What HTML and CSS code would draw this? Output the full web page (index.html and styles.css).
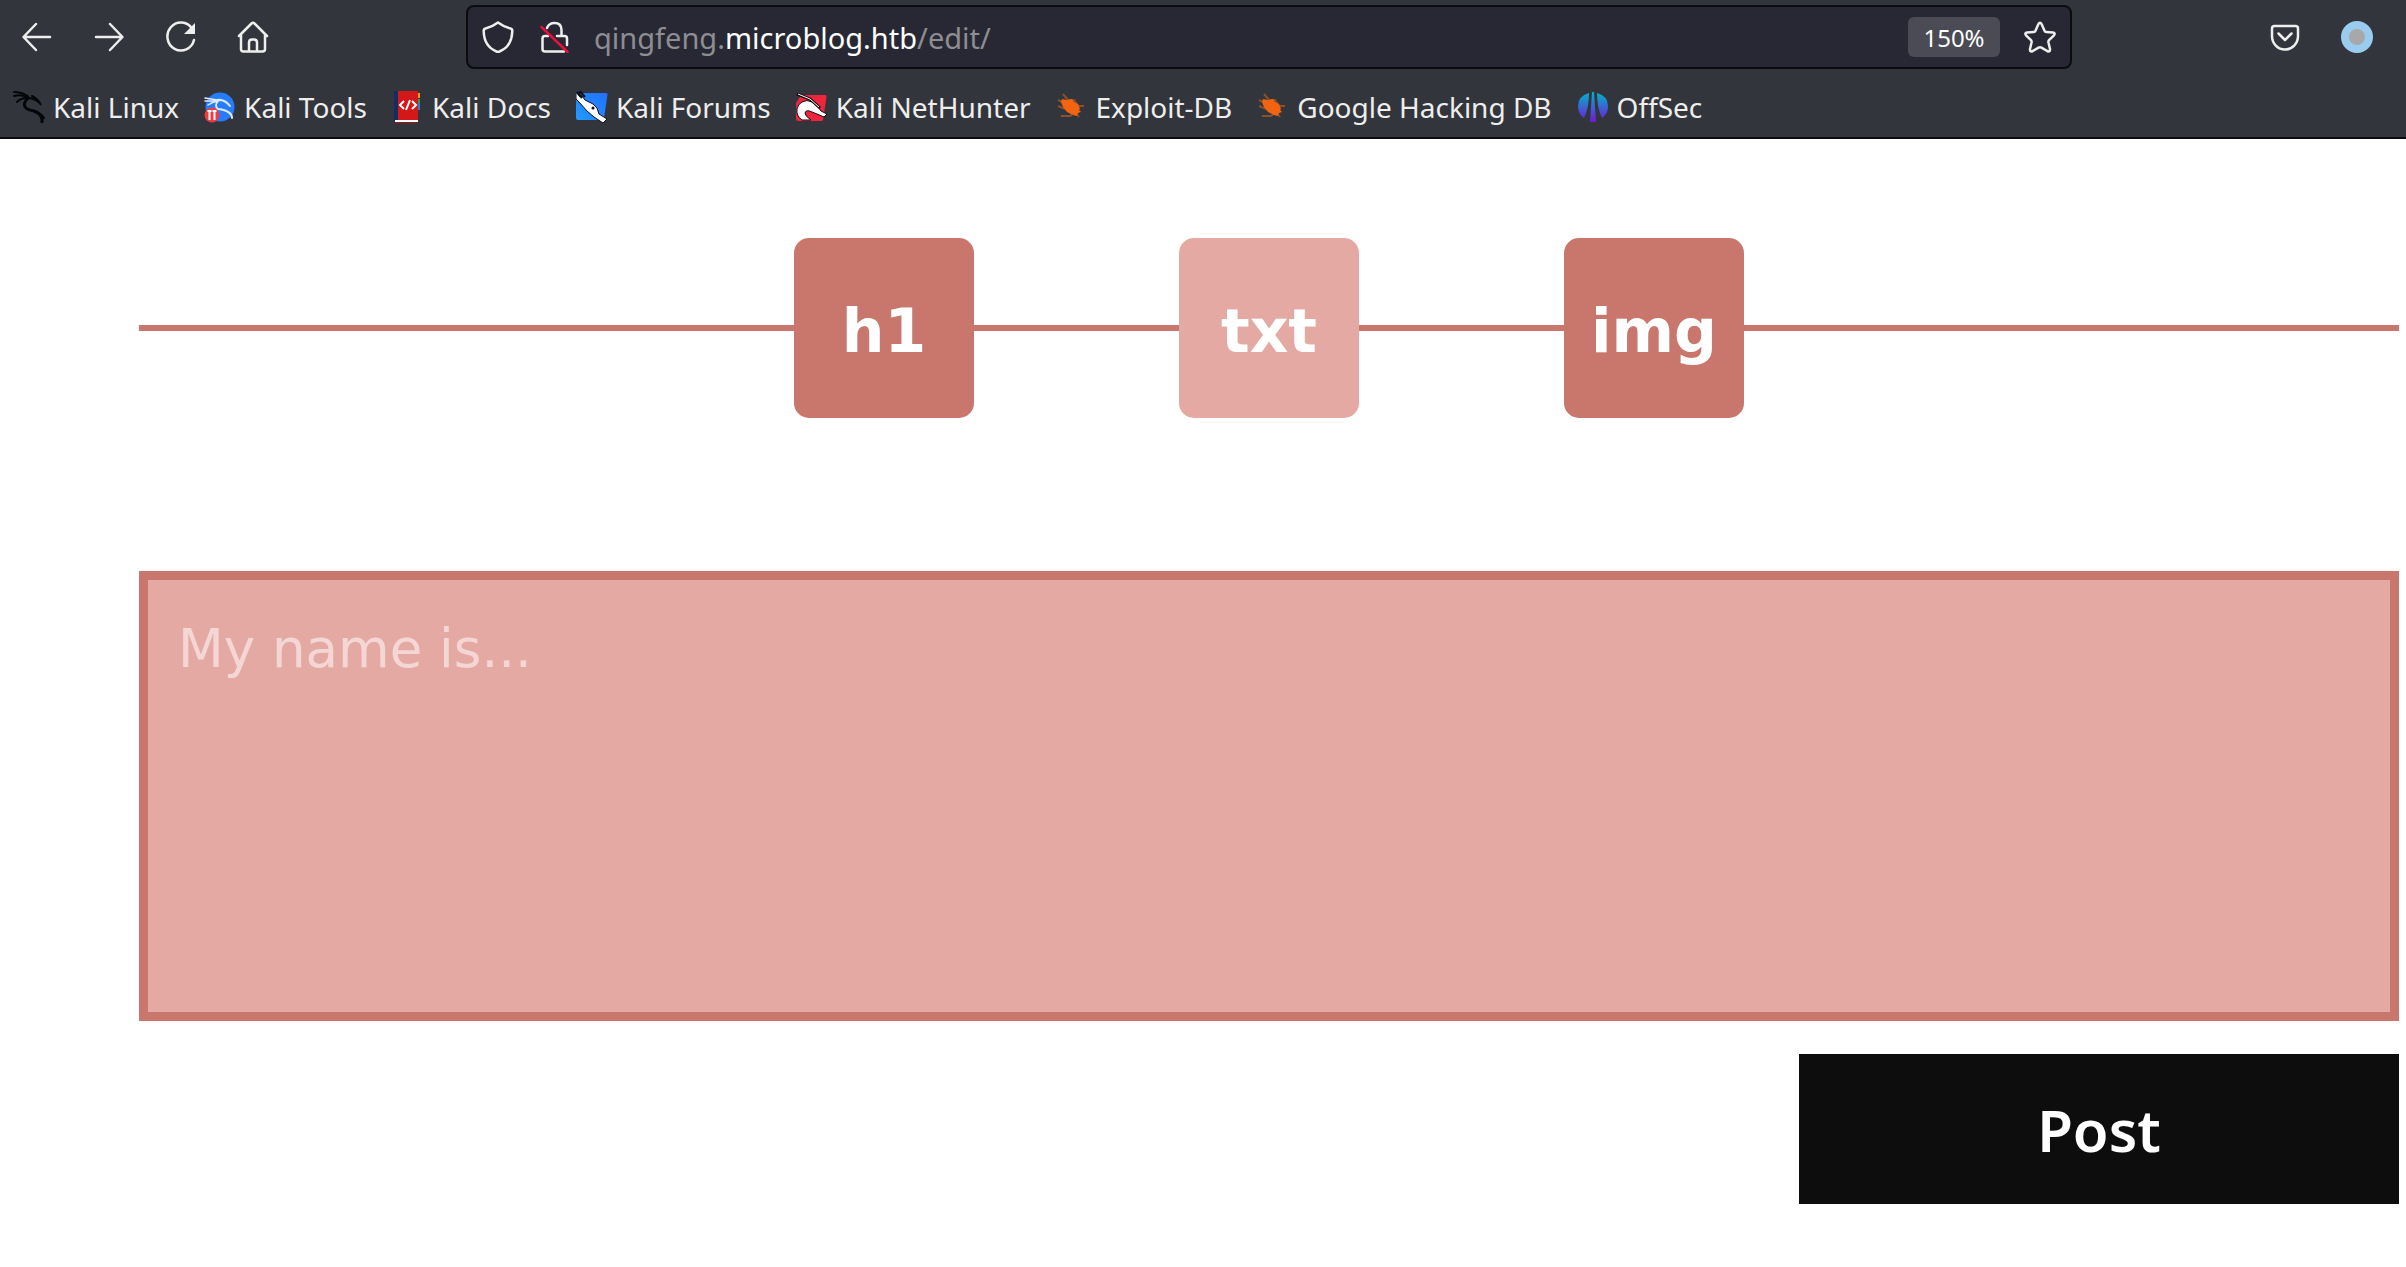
FILE: index.html
```html
<!DOCTYPE html>
<html lang="en">
<head>
<meta charset="utf-8">
<meta name="viewport" content="width=device-width, initial-scale=1">
<title>qingfeng.microblog.htb/edit/</title>
<link rel="stylesheet" href="styles.css">
</head>
<body>
<header class="chrome">
  <div class="toolbar">
    <button class="tool" type="button" aria-label="Back"><svg class="icon" viewBox="0 0 32 32"><path d="M29 16H3M15 3L2.500 16L15 29"/></svg></button>
    <button class="tool" type="button" aria-label="Forward"><svg class="icon" viewBox="0 0 32 32"><path d="M3 16h26M17 3l12.500 13L17 29"/></svg></button>
    <button class="tool" type="button" aria-label="Reload"><svg class="icon" viewBox="0 0 32 32"><path d="M27 7.500A13.500 14 0 1 0 29 19"/><path class="solid" d="M30 2v11H19z"/></svg></button>
    <button class="tool" type="button" aria-label="Home"><svg class="icon" viewBox="0 0 32 32"><path d="M2 15L14.500 2.500Q16 1 17.500 2.500L30 15M4 13.500V28q0 2.500 2.500 2.500h19q2.500 0 2.500-2.500V13.500M12 30V21.500q0-3 3-3h2q3 0 3 3V30"/></svg></button>
    <div class="spacer"></div>
    <div class="urlbar">
      <svg class="icon" viewBox="0 0 32 32"><path d="M16 1.500Q22 6 28.500 7.500Q30.500 8 30.300 10.500C30 20 26 27 17.500 30.500Q16 31 14.500 30.500C6 27 2 20 1.700 10.500Q1.500 8 3.500 7.500Q10 6 16 1.500z"/></svg>
      <svg class="icon" viewBox="0 0 32 32"><path d="M9 7Q11 2 16.500 2q7 0 7 7v6M10 15H7q-2.500 0-2.500 2.500V28q0 2.500 2.500 2.500h19M19 15h7.500q2.500 0 2.500 2.500V24"/><path class="strike" d="M3.500 6L29.500 31"/></svg>
      <div class="address">qingfeng.<span class="domain">microblog.htb</span>/edit/</div>
      <button class="zoom" type="button">150%</button>
      <button class="star" type="button" aria-label="Bookmark this page"><svg class="icon" viewBox="0 0 32 32"><path d="M14.300 3.300Q16 .300 17.700 3.300L20.500 9.700Q21 10.900 22.300 11L28.800 11.600Q32 12 29.700 14.600L25 19.200Q24.200 20.100 24.400 21.300L26 28Q26.300 31.500 23.200 30L17.500 26.600Q16 25.800 14.500 26.600L8.800 30Q5.700 31.500 6 28L7.600 21.300Q7.800 20.100 7 19.200L2.300 14.600Q0 12 3.200 11.600L9.700 11Q11 10.900 11.500 9.700z"/></svg></button>
    </div>
    <div class="spacer"></div>
    <button class="tool" type="button" aria-label="Save to Pocket"><svg class="icon" viewBox="0 0 32 32"><path d="M5.500 5h21Q29 5 29 7.500V15a13 13.500 0 0 1-26 0V7.500Q3 5 5.500 5zM9.500 12.500L16 19l6.500-6.500"/></svg></button>
    <button class="tool" type="button" aria-label="Account"><span class="avatar"></span></button>
  </div>
  <nav class="bookmarks">
    <a class="bookmark" href="#"><svg class="mark" viewBox="0 0 32 32"><g fill="none" stroke="#050608" stroke-width="2" stroke-linecap="round"><path d="M1 1q8 0 13 4M1 5q7-2 13 1M4 11q4-4 10-4"/><path stroke-width="3" d="M14 5l1 2q-6 6-2 10q2 2 8 3q9 3 8 11"/><path d="M15 7q8 0 13 7q-3-6-9-9M22 21q7 2 9 6"/></g></svg>Kali Linux</a>
    <a class="bookmark" href="#"><svg class="mark" viewBox="0 0 32 32"><circle cx="16" cy="16" r="14.500" fill="#267cff"/><g fill="none" stroke="#dcecff" stroke-linecap="round"><path d="M1 7l12 2M1 10l11 0M4 14q4-3 10-4" stroke-width="1.500"/><path d="M13 9q8-1 13 6M14 10q-4 5 0 8q8 1 10 3q4 2 4 6" stroke-width="2"/></g><circle cx="8" cy="24" r="7.500" fill="#f13b3f"/><path d="M5.500 20v9M10.500 20v9M3.500 20h4M8.500 20h4" stroke="#fff" stroke-width="2"/></svg>Kali Tools</a>
    <a class="bookmark" href="#"><svg class="mark" viewBox="0 0 32 32"><path d="M2 0h5v32H2z" fill="#102e64"/><path d="M6 0h20v29H6z" fill="#d41717"/><path d="M26 2h2v5h-2z" fill="#f89818"/><path d="M26 8h2v4h-2z" fill="#20a35b"/><path d="M26 12h2v7h-2z" fill="#2585cc"/><path d="M3 29h23v2H3z" fill="#fff"/><path d="M3 31h23v1H3z" fill="#9c1616"/><path d="M12 10l-4 4 4 4M20 10l4 4-4 4M18 9l-4 10" fill="none" stroke="#fff" stroke-width="2"/></svg>Kali Docs</a>
    <a class="bookmark" href="#"><svg class="mark" viewBox="0 0 32 32"><defs><linearGradient id="forum" x1="0" y1="1" x2="1" y2="0"><stop stop-color="#229aff"/><stop offset="1" stop-color="#226fff"/></linearGradient></defs><path d="M5 2h25q2 0 1.500 2L28 27q0 2-2 2H2q-2 0-2-2V5z" fill="url(#forum)"/><path d="M0 1l4 5-1-5 6 8 8 4 4 4 2 6 8 5-4 4-9-6-7-6-8-9-3-3z" fill="#fff" stroke="#07101c"/><path d="M1 1l5 6M4 0l5 6" stroke="#07101c" stroke-width="2"/><circle cx="17" cy="17" r="1.500" fill="#07101c"/></svg>Kali Forums</a>
    <a class="bookmark" href="#"><svg class="mark" viewBox="0 0 32 32"><path d="M5 4h24q2 0 1.500 2L27 29q0 1-2 1H2q-2 0-2-3V12z" fill="#ed263e"/><path d="M6 11q5-3 10 0l6 5 3 4 6 3-3 3-7-3-5-2q-6-3-7 1 0 3 6 7H6Q0 25 1 18Q2 13 6 11z" fill="#fff" stroke="#16090e"/><path d="M1 3l13 5 10 9" fill="none" stroke="#16090e" stroke-width="3"/><path d="M2 3l12 5 9 8" fill="none" stroke="#fff"/></svg>Kali NetHunter</a>
    <a class="bookmark" href="#"><svg class="mark" viewBox="0 0 32 32"><use href="#bug"/></svg>Exploit-DB</a>
    <a class="bookmark" href="#"><svg class="mark" viewBox="0 0 32 32"><g id="bug"><path d="M7 3l5 6 6 0 4 6h6M2 9l6 3M2 15l7 3M5 25h9l5-4 4 5" fill="none" stroke="#88502c" stroke-width="2"/><path d="M6 8l5 1 5-1 2 3 4 2 2 5-1 1 2 2-3 1-1 3-4-1-6-3-4-5-2-5z" fill="#f26410"/></g></svg>Google Hacking DB</a>
    <a class="bookmark" href="#"><svg class="mark" viewBox="0 0 32 32"><defs><linearGradient id="offsec" gradientUnits="userSpaceOnUse" x1="0" y1="1" x2="0" y2="31"><stop stop-color="#00b6ca"/><stop offset="1" stop-color="#7315d8"/></linearGradient></defs><path d="M12 2Q1 5 1 15q0 8 6 12Q12 17 12 2zM20 2q11 3 11 13q0 8-6 12Q20 17 20 2zM15 1h2l2 30h-6z" fill="url(#offsec)"/></svg>OffSec</a>
  </nav>
</header>
<main class="editor">
  <div class="types">
    <button class="type" type="button">h1</button>
    <button class="type type-active" type="button">txt</button>
    <button class="type" type="button">img</button>
  </div>
  <form class="form">
    <textarea class="content" aria-label="Text" placeholder="My name is..."></textarea>
    <button class="post" type="button">Post</button>
  </form>
</main>
</body>
</html>
```
FILE: styles.css
```css
* { box-sizing: border-box; }

body {
  margin: 0;
  background: #fff;
  font-family: "Noto Sans", sans-serif;
}

button {
  border: 0;
  padding: 0;
  font-family: inherit;
}

.chrome {
  background: #33353d;
  border-bottom: 2px solid #0c0c0f;
  color: #eeeeec;
}

.toolbar {
  display: flex;
  align-items: center;
  height: 74px;
  padding: 0 13px 0 1px;
}

.tool {
  display: flex;
  align-items: center;
  justify-content: center;
  width: 72px;
  height: 64px;
  background: none;
}

.icon {
  display: block;
  flex: none;
  width: 32px;
  height: 32px;
  fill: none;
  stroke: #eeeeec;
  stroke-width: 2.5;
  stroke-linecap: round;
  stroke-linejoin: round;
}

.icon .solid { fill: #eeeeec; stroke: none; }
.icon .strike { stroke: #e8103c; }

.spacer { flex: 177 1 0; }

.urlbar {
  display: flex;
  flex: 1574 1 0;
  align-items: center;
  gap: 24px;
  height: 64px;
  padding: 0 14px;
  border: 2px solid #0c0c0f;
  border-radius: 8px;
  background: #272833;
}

.address {
  flex: 1;
  padding-top: 2px;
  color: #8d8d92;
  font-size: 29px;
  line-height: 40px;
}

.domain { color: #fff; }

.zoom {
  width: 92px;
  height: 40px;
  padding-top: 2px;
  border-radius: 6px;
  background: #4a4b54;
  color: #fff;
  font-size: 24px;
  line-height: 38px;
}

.star { background: none; }

.avatar {
  width: 32px;
  height: 32px;
  border: 8px solid #99ccef;
  border-radius: 50%;
  background: #a8a8a8;
}

.bookmarks {
  display: flex;
  height: 63px;
  padding: 3px 0 0 13px;
  gap: 25px;
}

.bookmark {
  display: flex;
  align-items: center;
  gap: 8px;
  height: 60px;
  color: #eeeeec;
  font-size: 28px;
  white-space: nowrap;
  text-decoration: none;
}

.mark {
  width: 32px;
  height: 32px;
}

.editor { padding: 99px 7px 60px 139px; }

.types {
  display: flex;
  justify-content: center;
  gap: 205px;
  background: linear-gradient(#c9766c, #c9766c) center / 100% 6px no-repeat;
}

.type {
  width: 180px;
  height: 180px;
  padding-top: 6px;
  border-radius: 15px;
  background: #c9766c;
  color: #fff;
  font: bold 60px/72px "DejaVu Sans", sans-serif;
}

.type-active { background: #e5a9a4; }

.form {
  display: flex;
  flex-direction: column;
  gap: 33px;
  margin-top: 153px;
}

.content {
  height: 450px;
  padding: 30px;
  border: 9px solid #c9766c;
  border-radius: 0;
  background: #e5a9a4;
  color: #fff;
  font: 53px/78px "DejaVu Sans", sans-serif;
  resize: none;
}

.content::placeholder { color: #f4d7d4; }

.post {
  align-self: flex-end;
  width: 600px;
  height: 150px;
  background: #0d0d0d;
  color: #fff;
  font-size: 58px;
  font-weight: 600;
}
```
